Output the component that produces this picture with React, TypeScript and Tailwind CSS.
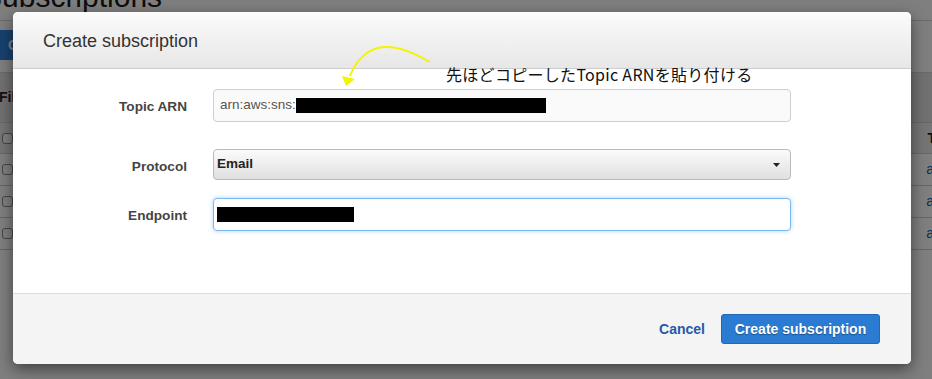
import React from "react";

const rows = [0, 1, 2];

function YellowArrow() {
  return (
    <svg className="absolute left-0 top-0 pointer-events-none" width="932" height="379">
      <path
        d="M430 62 C 412 52, 398 46, 384 47 C 368 48, 356 60, 350 76"
        fill="none"
        stroke="#f4f400"
        strokeWidth="2"
      />
      <polygon points="346,86 342,76 355,79" fill="#f4f400" />
    </svg>
  );
}

function Caret() {
  return (
    <svg width="7" height="4" viewBox="0 0 7 4">
      <path d="M0 0 H7 L3.5 4 Z" fill="#222" />
    </svg>
  );
}

export default function App() {
  return (
    <div className="relative w-[932px] h-[379px] overflow-hidden bg-white font-['Liberation_Sans',Arial,sans-serif] text-[#333]">
      {/* page behind the dialog */}
      <div className="flex flex-col">
        <div className="h-[21px] border-b border-[#d5d5d5] overflow-hidden">
          <div className="-mt-[21px] -ml-[18px] text-[30px] leading-[36px] text-[#1a1a1a]">Subscriptions</div>
        </div>
        <div className="h-[52px] pt-[9px] border-b border-[#d5d5d5]">
          <div className="w-[13px] h-[30px] overflow-hidden">
            <div className="w-[90px] h-[30px] -ml-[2px] bg-[#2f84dd] rounded-[3px] pl-[10px] text-white text-[14px] font-bold leading-[30px]">
              Create
            </div>
          </div>
        </div>
        <div className="h-[50px] bg-[#e3e3e3] border-b border-[#cfcfcf] flex items-center">
          <span className="-ml-[1px] text-[14px] font-bold text-[#222]">Filter</span>
        </div>
        <div className="h-[31px] bg-[#ebebeb] border-b border-[#cfcfcf] flex items-center justify-between pl-[2px]">
          <div className="w-[11px] h-[11px] border border-[#888] rounded-[3px] bg-white" />
          <span className="text-[14px] font-bold text-[#222] mr-[-4px]">T</span>
        </div>
        {rows.map((r) => (
          <div key={r} className="h-[32px] border-b border-[#cfcfcf] flex items-center justify-between pl-[2px]">
            <div className="w-[11px] h-[11px] border border-[#888] rounded-[3px] bg-white" />
            <span className="text-[14px] text-[#1d5fb5] mr-[-2px]">a</span>
          </div>
        ))}
      </div>

      {/* backdrop */}
      <div className="absolute inset-0 bg-black/50" />

      {/* dialog */}
      <div className="absolute left-[13px] top-[12px] w-[898px] flex flex-col rounded-[5px] bg-white shadow-[0_5px_15px_rgba(0,0,0,0.5)]">
        <div className="h-[57px] pl-[30px] pt-[3px] flex items-center border-b border-[#cdcdcd] rounded-t-[5px] bg-gradient-to-b from-[#fbfbfb] to-[#e7e7e7]">
          <span className="text-[18px] text-[#333]">Create subscription</span>
        </div>

        <div className="h-[224px] pt-[20px] flex flex-col">
          <div className="flex items-center h-[33px] mb-[27px]">
            <label className="w-[174px] text-right pt-[4px] text-[13.6px] font-bold text-[#444]">Topic ARN</label>
            <div className="ml-[26px] w-[578px] h-[33px] rounded-[4px] border border-[#cfcfcf] bg-[#fafafa] flex items-center pl-[6px] text-[13.5px] text-[#555]">
              <span>arn:aws:sns:</span>
              <span className="w-[250px] h-[15px] bg-black" />
            </div>
          </div>

          <div className="flex items-center h-[31px] mb-[18px]">
            <label className="w-[174px] text-right pt-[5px] text-[13.6px] font-bold text-[#444]">Protocol</label>
            <div className="ml-[26px] w-[578px] h-[31px] rounded-[4px] border border-[#b9b9b9] bg-gradient-to-b from-[#fbfbfb] to-[#e0e0e0] flex items-center justify-between pl-[3px] pr-[10px]">
              <span className="text-[13.5px] font-bold text-[#222]">Email</span>
              <Caret />
            </div>
          </div>

          <div className="flex items-center h-[33px]">
            <label className="w-[174px] text-right pt-[4px] text-[13.6px] font-bold text-[#444]">Endpoint</label>
            <div className="ml-[26px] w-[578px] h-[33px] rounded-[4px] border border-[#7ab9f2] bg-white shadow-[0_0_4px_rgba(102,175,233,0.55)] flex items-center pl-[3px]">
              <span className="w-[137px] h-[15px] bg-black" />
            </div>
          </div>
        </div>

        <div className="h-[71px] border-t border-[#dcdcdc] bg-[#f4f4f4] rounded-b-[5px] flex items-center justify-end pr-[31px] gap-[16px]">
          <span className="text-[14px] font-bold text-[#1f5bab]">Cancel</span>
          <button className="h-[30px] w-[159px] rounded-[3px] bg-[#2a7bd1] border border-[#2468b5] text-[14px] font-bold text-white [text-shadow:0_1px_1px_rgba(0,0,0,0.35)]">
            Create subscription
          </button>
        </div>
      </div>

      {/* annotation */}
      <YellowArrow />
      <div className="absolute left-[446px] top-[64px] text-[16px] leading-[20px] tracking-[0.3px] text-[#111] font-['Noto_Sans_CJK_JP','Liberation_Sans',sans-serif]">
        先ほどコピーしたTopic ARNを貼り付ける
      </div>
    </div>
  );
}
